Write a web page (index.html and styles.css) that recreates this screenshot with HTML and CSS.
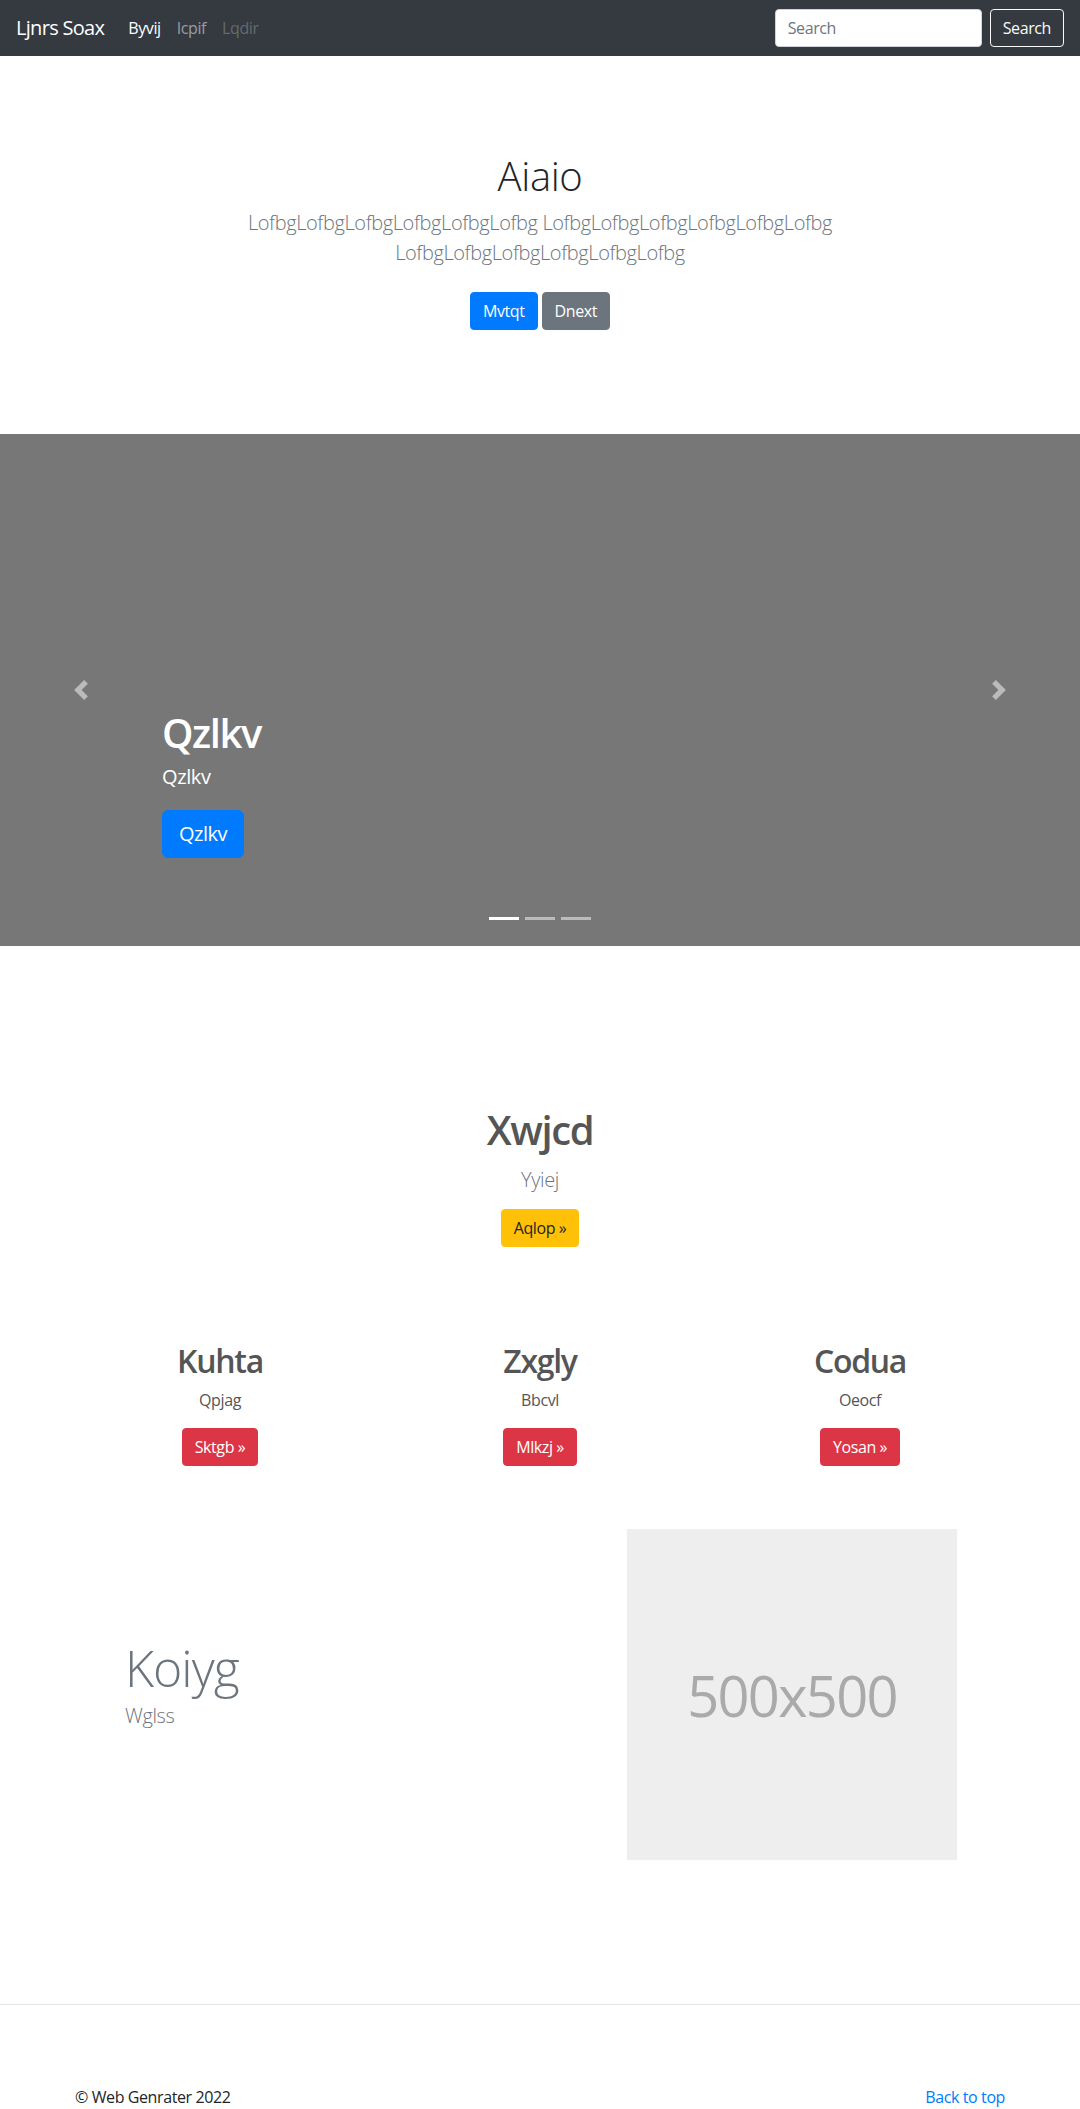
FILE: index.html
```html
<!DOCTYPE html>
<html lang="en">
<head>
<meta charset="utf-8">
<title>Ljnrs Soax</title>
<link rel="stylesheet" href="styles.css">
</head>
<body>
<nav class="navbar">
  <a class="brand" href="#">Ljnrs Soax</a>
  <ul class="nav">
    <li><a class="nav-link active" href="#">Byvij</a></li>
    <li><a class="nav-link" href="#">Icpif</a></li>
    <li><a class="nav-link disabled" href="#">Lqdir</a></li>
  </ul>
  <form class="search">
    <input class="search-input" type="text" placeholder="Search">
    <button class="btn btn-outline-light" type="button">Search</button>
  </form>
</nav>

<section class="jumbotron">
  <div class="jumbo-inner">
    <h1 class="jumbo-heading">Aiaio</h1>
    <p class="lead muted">LofbgLofbgLofbgLofbgLofbgLofbg LofbgLofbgLofbgLofbgLofbgLofbg LofbgLofbgLofbgLofbgLofbgLofbg</p>
    <p class="jumbo-actions">
      <a class="btn btn-primary" href="#">Mvtqt</a>
      <a class="btn btn-secondary" href="#">Dnext</a>
    </p>
  </div>
</section>

<div class="carousel">
  <div class="slide">
    <div class="caption">
      <h1 class="caption-title">Qzlkv</h1>
      <p class="caption-text">Qzlkv</p>
      <p class="caption-action"><a class="btn btn-lg btn-primary" href="#">Qzlkv</a></p>
    </div>
  </div>
  <a class="control control-prev" href="#">
    <svg class="control-icon" viewBox="0 0 8 8" width="20" height="20"><path fill="#fff" d="M5.25 0l-4 4 4 4 1.5-1.5-2.5-2.5 2.5-2.5-1.5-1.5z"/></svg>
  </a>
  <a class="control control-next" href="#">
    <svg class="control-icon" viewBox="0 0 8 8" width="20" height="20"><path fill="#fff" d="M2.75 0l-1.5 1.5 2.5 2.5-2.5 2.5 1.5 1.5 4-4-4-4z"/></svg>
  </a>
  <ol class="indicators">
    <li class="active"></li>
    <li></li>
    <li></li>
  </ol>
</div>

<section class="marketing">
  <div class="intro">
    <h1 class="intro-title">Xwjcd</h1>
    <p class="lead muted intro-lead">Yyiej</p>
    <p class="intro-action"><a class="btn btn-warning" href="#">Aqlop &raquo;</a></p>
  </div>

  <div class="cols">
    <div class="col">
      <h2 class="col-title">Kuhta</h2>
      <p class="col-text">Qpjag</p>
      <p class="col-action"><a class="btn btn-danger" href="#">Sktgb &raquo;</a></p>
    </div>
    <div class="col">
      <h2 class="col-title">Zxgly</h2>
      <p class="col-text">Bbcvl</p>
      <p class="col-action"><a class="btn btn-danger" href="#">Mlkzj &raquo;</a></p>
    </div>
    <div class="col">
      <h2 class="col-title">Codua</h2>
      <p class="col-text">Oeocf</p>
      <p class="col-action"><a class="btn btn-danger" href="#">Yosan &raquo;</a></p>
    </div>
  </div>

  <div class="featurette">
    <div class="feat-text">
      <h2 class="feat-heading">Koiyg</h2>
      <p class="lead muted feat-lead">Wglss</p>
    </div>
    <div class="placeholder">500x500</div>
  </div>
</section>

<hr class="divider">

<footer class="footer">
  <p class="copy">&copy; Web Genrater 2022</p>
  <p class="back"><a href="#">Back to top</a></p>
</footer>
</body>
</html>
```

FILE: styles.css
```css
* { box-sizing: border-box; }

html, body {
  margin: 0;
  padding: 0;
}

body {
  font-family: "Open Sans", "Noto Sans", "Liberation Sans", sans-serif;
  font-size: 16px;
  line-height: 1.5;
  letter-spacing: -0.025em;
  color: #212529;
  background: #fff;
}

a { text-decoration: none; }

p { margin: 0; }
h1, h2 { margin: 0; }

/* ---------- navbar ---------- */
.navbar {
  display: flex;
  align-items: center;
  height: 56px;
  padding: 8px 16px;
  background: #343a40;
}

.brand {
  color: #fff;
  font-size: 20px;
  line-height: 30px;
  letter-spacing: -0.035em;
  padding: 5px 0;
  margin-right: 16px;
}

.nav {
  display: flex;
  list-style: none;
  margin: 0;
  padding: 0;
}

.nav-link {
  display: block;
  padding: 8px;
  color: rgba(255, 255, 255, 0.5);
  line-height: 24px;
}
.nav-link.active { color: #fff; }
.nav-link.disabled { color: rgba(255, 255, 255, 0.25); }

.search {
  display: flex;
  align-items: center;
  margin-left: auto;
}

.search-input {
  width: 207px;
  height: 38px;
  padding: 6px 12px;
  font-family: inherit;
  font-size: 16px;
  letter-spacing: -0.025em;
  color: #495057;
  background: #fff;
  border: 1px solid #ced4da;
  border-radius: 4px;
  margin-right: 8px;
}
.search-input::placeholder { color: #6c757d; }

/* ---------- buttons ---------- */
.btn {
  display: inline-block;
  font-family: inherit;
  font-size: 16px;
  line-height: 24px;
  letter-spacing: -0.025em;
  padding: 6px 12px;
  border: 1px solid transparent;
  border-radius: 4px;
  vertical-align: middle;
  cursor: pointer;
}
.btn-outline-light { color: #f8f9fa; border-color: #f8f9fa; background: transparent; }
.btn-primary { color: #fff; background: #007bff; border-color: #007bff; }
.btn-secondary { color: #fff; background: #6c757d; border-color: #6c757d; }
.btn-warning { color: #212529; background: #ffc107; border-color: #ffc107; }
.btn-danger { color: #fff; background: #dc3545; border-color: #dc3545; }
.btn-lg {
  font-size: 20px;
  line-height: 30px;
  padding: 8px 16px;
  border-radius: 6px;
}

.lead {
  font-size: 20px;
  font-weight: 300;
  line-height: 30px;
}
.muted { color: #6c757d; }

/* ---------- jumbotron ---------- */
.jumbotron {
  padding: 96px 0;
  text-align: center;
}
.jumbo-inner {
  max-width: 720px;
  margin: 0 auto;
  padding: 0 15px;
}
.jumbo-heading {
  font-size: 40px;
  font-weight: 300;
  line-height: 48px;
  margin-bottom: 8px;
}
.jumbo-inner .lead { margin-bottom: 16px; }
.jumbo-actions {
  display: flex;
  justify-content: center;
  gap: 4px;
  padding: 8px 0;
}

/* ---------- carousel ---------- */
.carousel {
  position: relative;
  height: 512px;
  background: #777;
}
.slide {
  height: 100%;
}
.caption {
  position: absolute;
  left: 15%;
  right: 15%;
  bottom: 52px;
  padding: 20px 0;
  color: #fff;
  text-align: left;
  z-index: 10;
}
.caption-title {
  font-size: 40px;
  font-weight: 600;
  line-height: 48px;
  letter-spacing: -0.035em;
  margin-bottom: 5px;
}
.caption-text {
  font-size: 20px;
  line-height: 30px;
  margin-bottom: 18px;
}
.caption-action { margin-bottom: 16px; display: flex; }

.control {
  position: absolute;
  top: 0;
  bottom: 0;
  width: 15%;
  display: flex;
  align-items: center;
  justify-content: center;
  opacity: 0.5;
}
.control-prev { left: 0; }
.control-next { right: 0; }
.control-icon { display: block; }

.indicators {
  position: absolute;
  left: 15%;
  right: 15%;
  bottom: 0;
  margin: 0 0 16px;
  padding: 0;
  list-style: none;
  display: flex;
  justify-content: center;
}
.indicators li {
  width: 30px;
  height: 23px;
  margin: 0 3px;
  border-top: 10px solid transparent;
  border-bottom: 10px solid transparent;
  background: #fff;
  background-clip: padding-box;
  opacity: 0.5;
}
.indicators li.active { opacity: 1; }

/* ---------- marketing ---------- */
.marketing {
  width: 960px;
  margin: 0 auto;
  padding-top: 160px;
}
.intro {
  text-align: center;
}
.intro-title {
  font-size: 40px;
  font-weight: 600;
  line-height: 48px;
  letter-spacing: -0.035em;
  color: #555;
  margin-bottom: 11px;
}
.intro-lead { margin-bottom: 14px; }
.intro-action { display: flex; justify-content: center; }

.cols {
  display: grid;
  grid-template-columns: repeat(3, 1fr);
  margin-top: 95px;
  text-align: center;
}
.col { padding: 0 15px; }
.col-title {
  font-size: 32px;
  font-weight: 600;
  line-height: 38px;
  letter-spacing: -0.04em;
  color: #555;
  margin-bottom: 8px;
}
.col-text {
  color: #555;
  margin-bottom: 16px;
}
.col-action { display: flex; justify-content: center; }

.featurette {
  width: 834px;
  margin: 63px auto 0;
  display: flex;
  align-items: center;
  justify-content: space-between;
}
.feat-text { padding-left: 2px; }
.feat-heading {
  font-size: 50px;
  font-weight: 300;
  line-height: 50px;
  letter-spacing: -0.02em;
  color: #6c757d;
  margin-bottom: 8px;
}
.feat-lead { margin-bottom: 16px; }
.placeholder {
  width: 330px;
  height: 331px;
  background: #eee;
  color: #aaa;
  font-size: 56px;
  letter-spacing: -0.03em;
  display: flex;
  align-items: center;
  justify-content: center;
}

/* ---------- footer ---------- */
.divider {
  margin: 144px 0 80px;
  border: 0;
  border-top: 1px solid rgba(0, 0, 0, 0.1);
}

.footer {
  width: 960px;
  margin: 0 auto;
  padding: 0 15px 16px;
  display: flex;
  justify-content: space-between;
}
.back a { color: #007bff; }
```
